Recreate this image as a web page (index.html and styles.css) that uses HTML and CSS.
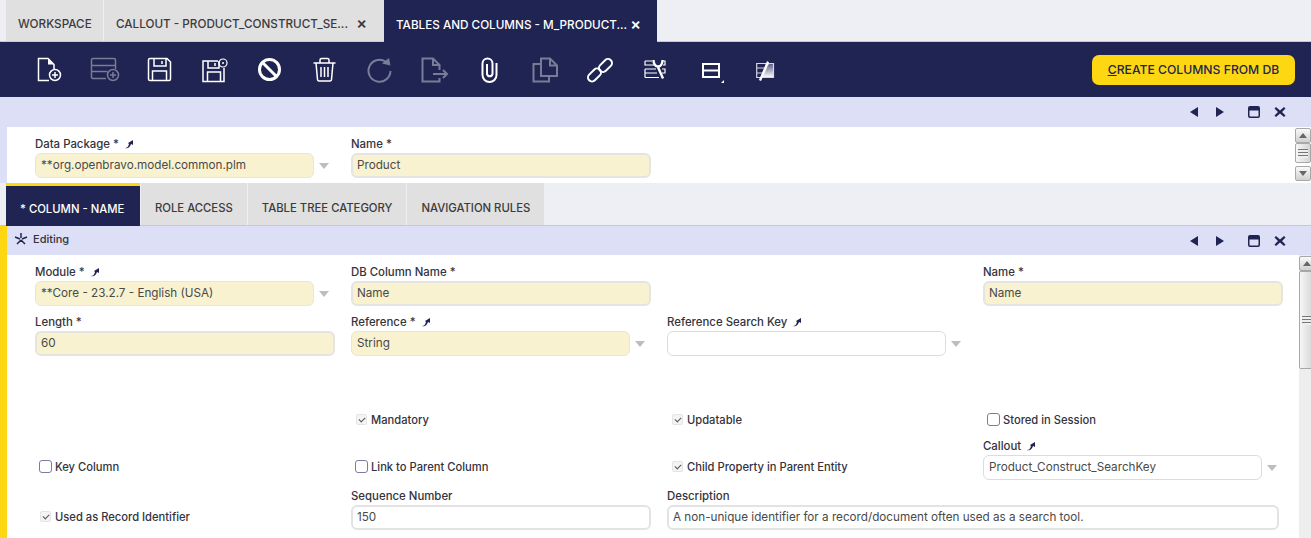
FILE: index.html
```html
<!DOCTYPE html>
<html lang="en">
<head>
  <meta charset="UTF-8">
  <title>Tables and Columns</title>
  <link rel="stylesheet" href="styles.css">
</head>
<body>
  <div class="tabbar">
    <div class="mtab">WORKSPACE</div>
    <div class="mtab callout"><span>CALLOUT - PRODUCT_CONSTRUCT_SE...</span><b>×</b></div>
    <div class="mtab active"><span>TABLES AND COLUMNS - M_PRODUCT...</span><b>×</b></div>
  </div>

  <div class="toolbar">
    <div class="slot"><svg class="tool" width="33" height="27" viewBox="0 0 33 27"><path d="M16 24.500H5.500V2.500H15L21 8.500V13"/><path d="M15 2.500V8.500H21z" class="fill"/><circle cx="22" cy="19" r="5.500"/><path d="M19 19h6M22 16v6"/></svg></div>
    <div class="slot off"><svg class="tool" width="33" height="27" viewBox="0 0 33 27"><path d="M18 22.500H5a1.500 1.500 0 0 1-1.500-1.500V4A1.500 1.500 0 0 1 5 2.500h21A1.500 1.500 0 0 1 27.500 4v9M3.500 9.500h24M3.500 15.500h16"/><circle cx="25" cy="19" r="5.500"/><path d="M22 19h6M25 16v6"/></svg></div>
    <div class="slot"><svg class="tool" width="33" height="27" viewBox="0 0 33 27"><path d="M5.500 4A1.500 1.500 0 0 1 7 2.500h17L27.500 6v17a1.500 1.500 0 0 1-1.500 1.500H7A1.500 1.500 0 0 1 5.500 23zM11 2.500V10h12V2.500M19 5v3M9.500 24.500V15h14v9.500"/></svg></div>
    <div class="slot"><svg class="tool" width="33" height="27" viewBox="0 0 33 27"><path d="M20 5H5v20.500h21V12M10 5v7h11V5M17 7v3M9.500 25.500V16h13v9.500"/><circle cx="25" cy="7" r="4" class="fine"/><circle cx="25" cy="7" r="1" class="fill"/></svg></div>
    <div class="slot"><svg class="tool bold" width="33" height="27" viewBox="0 0 33 27"><circle cx="16.500" cy="13.500" r="10"/><path d="M9.500 6.500l14 14"/></svg></div>
    <div class="slot"><svg class="tool" width="33" height="27" viewBox="0 0 33 27"><path d="M5.500 7h22M12 7V4a1.500 1.500 0 0 1 1.500-1.500h6A1.500 1.500 0 0 1 21 4v3M8 7l1.500 16.500a1.500 1.500 0 0 0 1.500 1.500h11a1.500 1.500 0 0 0 1.500-1.500L25 7M13 11v10M16.500 11v10M20 11v10"/></svg></div>
    <div class="slot off"><svg class="tool thick" width="33" height="27" viewBox="0 0 33 27"><path d="M22.500 5.500A11 11 0 1 0 27.500 15"/><path d="M19 7.500l8.500 2L26 2z" class="fill"/></svg></div>
    <div class="slot off"><svg class="tool thick" width="33" height="27" viewBox="0 0 33 27"><path d="M21.500 14V9l-6.500-6.500H4.500v23h17V22M15 2.500V9h6.500M15 18h14M25 14l4 4-4 4"/></svg></div>
    <div class="slot"><svg class="tool thick" width="33" height="27" viewBox="0 0 33 27"><path d="M23.500 7v12a7 7 0 0 1-14 0V7.500a5 5 0 0 1 10 0V18a2.800 2.800 0 0 1-5.500 0V8"/></svg></div>
    <div class="slot off"><svg class="tool thick" width="33" height="27" viewBox="0 0 33 27"><path d="M13 8H5.500v17.500H21V20M13 20V2.500h9l7 7V20zM22 2.500v7h7"/></svg></div>
    <div class="slot"><svg class="tool thick" width="33" height="27" viewBox="0 0 33 27"><rect x="15" y="5.500" width="15" height="8" rx="4" transform="rotate(-45 22.500 9.500)"/><rect x="4" y="15" width="15" height="8" rx="4" transform="rotate(-45 11.500 19)"/></svg></div>
    <div class="slot"><svg class="tool fine-all" width="33" height="27" viewBox="0 0 33 27"><path d="M7 5h7M24 5h3v4h-2M7 5v4h10M7 13h11M24 13h3v4h-3M7 13v4h12M7 21.500h14M7 17v4.500"/><path d="M15.500 4c0 4 2 6.500 4.500 6.500s4.500-2.500 4.500-6.500M19.500 10l5.500 12.500" class="knock"/></svg></div>
    <div class="slot"><svg class="tool layout" width="33" height="27" viewBox="0 0 33 27"><rect x="10" y="8" width="16" height="13"/><path d="M10 14.500h16"/><path d="M31 24v3h-3z" class="fill"/></svg></div>
    <div class="slot"><svg class="tool fine-all" width="33" height="27" viewBox="0 0 33 27"><defs><linearGradient id="fade" x1="0" y1="0" x2="0" y2="1"><stop offset="0" stop-color="#555a80"/><stop offset="1" stop-color="#ffffff"/></linearGradient></defs><path d="M19.300 7.500h6.200v14H13.700z" fill="url(#fade)" stroke="none"/><path d="M8.700 7.500h16.800v14H8.700zM8.700 12h8M8.700 17h6" class="pale"/><path d="M12 24.500L20 6" class="knock"/><path d="M17.500 9l2.500-4.500.5 4.500z" class="fill"/></svg></div>
    <button class="process"><u>C</u>REATE COLUMNS FROM DB</button>
  </div>

  <div class="band">
    <svg class="ctl" viewBox="0 0 12 12"><path d="M10 1v10L2 6z"/></svg>
    <svg class="ctl" viewBox="0 0 12 12"><path d="M2 1v10l8-5z"/></svg>
    <svg class="ctl wide" viewBox="0 0 12 12"><path fill-rule="evenodd" d="M2 0h8a2 2 0 0 1 2 2v8a2 2 0 0 1-2 2H2a2 2 0 0 1-2-2V2a2 2 0 0 1 2-2zM1.500 4.500V10l.5.500h8l.5-.5V4.500z"/></svg>
    <svg class="ctl" viewBox="0 0 12 12"><path d="M2 1l4 3.500L10 1l1.500 1.500L8 6l3.500 3.500L10 11 6 7.500 2 11 .5 9.500 4 6 .5 2.500z"/></svg>
  </div>

  <div class="header-form">
    <div class="hform">
      <div class="field">
        <label>Data Package * <svg class="lnk" viewBox="0 0 10 10"><path d="M1 9c2 0 3-1 4-4L4 4l5-3v5L7 5c-1 3-3 5-6 4z"/></svg></label>
        <div class="sel"><div class="inp req">**org.openbravo.model.common.plm</div><i class="arrow"></i></div>
      </div>
      <div class="field">
        <label>Name *</label>
        <div class="inp text">Product</div>
      </div>
    </div>
    <div class="sbar small">
      <div class="sb-btn up"></div>
      <div class="sb-thumb"><i></i></div>
      <div class="sb-btn down"></div>
    </div>
  </div>

  <div class="subtabs">
    <div class="stab active">* COLUMN - NAME</div>
    <div class="stab">ROLE ACCESS</div>
    <div class="stab">TABLE TREE CATEGORY</div>
    <div class="stab">NAVIGATION RULES</div>
  </div>

  <div class="edit">
    <div class="band editing">
      <svg class="star" viewBox="0 0 14 14"><path d="M7 1v5M7 8l4 4M7 8l-4 4M1 5l5 2M13 5L8 7"/></svg>
      <span class="status">Editing</span>
      <svg class="ctl" viewBox="0 0 12 12"><path d="M10 1v10L2 6z"/></svg>
      <svg class="ctl" viewBox="0 0 12 12"><path d="M2 1v10l8-5z"/></svg>
      <svg class="ctl wide" viewBox="0 0 12 12"><path fill-rule="evenodd" d="M2 0h8a2 2 0 0 1 2 2v8a2 2 0 0 1-2 2H2a2 2 0 0 1-2-2V2a2 2 0 0 1 2-2zM1.500 4.500V10l.5.500h8l.5-.5V4.500z"/></svg>
      <svg class="ctl" viewBox="0 0 12 12"><path d="M2 1l4 3.500L10 1l1.500 1.500L8 6l3.500 3.500L10 11 6 7.500 2 11 .5 9.500 4 6 .5 2.500z"/></svg>
    </div>
    <div class="form-wrap">
      <div class="form">
        <div class="field">
          <label>Module * <svg class="lnk" viewBox="0 0 10 10"><path d="M1 9c2 0 3-1 4-4L4 4l5-3v5L7 5c-1 3-3 5-6 4z"/></svg></label>
          <div class="sel"><div class="inp req">**Core - 23.2.7 - English (USA)</div><i class="arrow"></i></div>
        </div>
        <div class="field">
          <label>DB Column Name *</label>
          <div class="inp text">Name</div>
        </div>
        <div class="field"></div>
        <div class="field">
          <label>Name *</label>
          <div class="inp text">Name</div>
        </div>

        <div class="field">
          <label>Length *</label>
          <div class="inp text">60</div>
        </div>
        <div class="field">
          <label>Reference * <svg class="lnk" viewBox="0 0 10 10"><path d="M1 9c2 0 3-1 4-4L4 4l5-3v5L7 5c-1 3-3 5-6 4z"/></svg></label>
          <div class="sel"><div class="inp req">String</div><i class="arrow"></i></div>
        </div>
        <div class="field">
          <label>Reference Search Key <svg class="lnk" viewBox="0 0 10 10"><path d="M1 9c2 0 3-1 4-4L4 4l5-3v5L7 5c-1 3-3 5-6 4z"/></svg></label>
          <div class="sel"><div class="inp blank"></div><i class="arrow"></i></div>
        </div>
        <div class="field"></div>

        <div class="check-cell low"></div>
        <div class="check-cell low"><span class="chk on"></span>Mandatory</div>
        <div class="check-cell low"><span class="chk on"></span>Updatable</div>
        <div class="check-cell low"><span class="chk"></span>Stored in Session</div>

        <div class="check-cell"><span class="chk"></span>Key Column</div>
        <div class="check-cell"><span class="chk"></span>Link to Parent Column</div>
        <div class="check-cell"><span class="chk on"></span>Child Property in Parent Entity</div>
        <div class="field">
          <label>Callout <svg class="lnk" viewBox="0 0 10 10"><path d="M1 9c2 0 3-1 4-4L4 4l5-3v5L7 5c-1 3-3 5-6 4z"/></svg></label>
          <div class="sel"><div class="inp blank">Product_Construct_SearchKey</div><i class="arrow"></i></div>
        </div>

        <div class="check-cell"><span class="chk on"></span>Used as Record Identifier</div>
        <div class="field">
          <label>Sequence Number</label>
          <div class="inp plain">150</div>
        </div>
        <div class="field span2">
          <label>Description</label>
          <div class="inp plain wide">A non-unique identifier for a record/document often used as a search tool.</div>
        </div>
      </div>
      <div class="sbar">
        <div class="sb-btn up"></div>
        <div class="sb-thumb long"><i></i></div>
      </div>
    </div>
  </div>
</body>
</html>
```

FILE: styles.css
```css
* {
  box-sizing: border-box;
}
html, body {
  margin: 0;
  height: 100%;
  overflow: hidden;
}
body {
  width: 1311px;
  height: 538px;
  font-family: Inter, "Liberation Sans", sans-serif;
  font-size: 11.4px;
  color: #33333d;
  background: #fff;
}

/* top tabs */
.tabbar {
  display: flex;
  height: 42px;
  padding-left: 6px;
  background: #eeeff5;
  border-bottom: 1px solid #c8c9cf;
}
.mtab {
  display: flex;
  align-items: center;
  justify-content: space-between;
  flex: none;
  width: 97px;
  height: 41px;
  padding: 7px 12px 0;
  margin-right: 1px;
  background: #e0e0e0;
  font-size: 11.7px;
  font-weight: 500;
  color: #3c3a3c;
  white-space: nowrap;
}
.mtab.callout {
  width: 280px;
  margin-right: 0;
  padding-right: 17px;
}
.mtab.active {
  width: 273px;
  height: 42px;
  background: #202452;
  color: #fff;
  padding-right: 16px;
}
.mtab b {
  margin-top: -2px;
  font-size: 16px;
  font-weight: 600;
}

/* toolbar */
.toolbar {
  display: flex;
  align-items: center;
  height: 55px;
  padding: 0 16px 0 22px;
  background: #202452;
}
.slot {
  flex: none;
  display: flex;
  justify-content: center;
  width: 55px;
  height: 27px;
}
.slot.off {
  opacity: .4;
}
.tool {
  fill: none;
  stroke: #fff;
  stroke-width: 1.500;
}
.tool.thick {
  stroke-width: 2;
}
.tool.bold {
  stroke-width: 3;
}
.tool.layout {
  stroke-width: 2;
}
.tool.fine-all {
  stroke-width: 1.200;
}
.tool .fine {
  stroke-width: 1.200;
}
.tool .fill {
  fill: #fff;
  stroke: none;
}
.tool .pale {
  stroke: #d5d6e2;
}
.tool .knock {
  stroke-width: 2.400;
}
.process {
  flex: none;
  margin-left: auto;
  width: 203px;
  height: 30px;
  border: none;
  border-radius: 7px;
  background: #fcd712;
  color: #202452;
  font-family: inherit;
  font-size: 12.2px;
  font-weight: 500;
}

/* light blue bands with window controls */
.band {
  display: flex;
  align-items: center;
  justify-content: flex-end;
  gap: 14px;
  height: 30px;
  padding-right: 25px;
  background: #dddff6;
}
.ctl {
  width: 12px;
  height: 12px;
  fill: #202452;
}
.ctl.wide {
  margin-left: 8px;
}

/* header form */
.header-form {
  display: flex;
  height: 56px;
  padding-left: 7px;
  background: #fff;
  box-shadow: inset 7px 0 0 #dddff6;
}
.hform {
  flex: 1;
  display: grid;
  grid-template-columns: 316px 316px;
  padding: 9px 0 0 28px;
}
.field {
  min-width: 0;
}
.field label {
  display: block;
  height: 17px;
  line-height: 17px;
  font-weight: 500;
  color: #33333d;
}
.lnk {
  width: 10px;
  height: 10px;
  margin-left: 2px;
  fill: #202452;
  vertical-align: -1px;
}
.sel {
  display: flex;
  align-items: center;
}
.inp {
  height: 25px;
  padding: 0 5px;
  line-height: 23px;
  border: 1px solid #eae6cf;
  border-radius: 6px;
  font-size: 11.7px;
  color: #4a4a4a;
  white-space: nowrap;
}
.sel .inp {
  width: 279px;
}
.inp.req {
  background: #f9f2d0;
}
.inp.text {
  width: 300px;
  padding: 0 4px;
  line-height: 21px;
  background: #f9f2d0;
  border: 2px solid #e4e4e0;
}
.inp.blank {
  background: #fff;
  border-color: #dcdcdc;
}
.inp.plain {
  width: 300px;
  padding: 0 4px;
  line-height: 21px;
  background: #fff;
  border: 2px solid #e3e3e3;
}
.inp.plain.wide {
  width: 612px;
}
.arrow {
  width: 0;
  height: 0;
  margin-left: 5px;
  border-left: 5px solid transparent;
  border-right: 5px solid transparent;
  border-top: 6px solid #bdbdbd;
}

/* sub tabs */
.subtabs {
  display: flex;
  height: 43px;
  padding-left: 6px;
  background: #eeeff5;
  border-bottom: 1px solid #c8c9cf;
}
.stab {
  display: flex;
  align-items: center;
  padding: 8px 14px 0;
  margin-right: 1px;
  background: #e0e0e0;
  font-size: 11.3px;
  font-weight: 500;
  color: #3c3a3c;
  white-space: nowrap;
}
.stab.active {
  width: 134px;
  height: 43px;
  padding-top: 5px;
  background: #202452;
  color: #fff;
  border-top: 3px solid #fcd712;
}

/* edit view */
.edit {
  border-left: 7px solid #fcd712;
}
.editing {
  height: 29px;
  padding-left: 7px;
  justify-content: flex-start;
}
.star {
  width: 14px;
  height: 14px;
  margin-bottom: 3px;
  fill: none;
  stroke: #202452;
  stroke-width: 1.500;
}
.status {
  margin: 0 auto 3px -9px;
  font-size: 11px;
  font-weight: 500;
}
.form-wrap {
  display: flex;
  height: 283px;
}
.form {
  flex: 1;
  display: grid;
  grid-template-columns: repeat(4, 316px);
  grid-template-rows: 50px 50px 74px 50px 50px;
  padding: 9px 0 0 28px;
}
.span2 {
  grid-column: span 2;
}
.check-cell {
  display: flex;
  align-items: flex-start;
  padding: 22px 0 0 4px;
  line-height: 15px;
  font-size: 11.2px;
  font-weight: 500;
  color: #33333d;
}
.check-cell.low {
  padding-top: 49px;
}
.chk {
  flex: none;
  width: 13px;
  height: 13px;
  margin-right: 3px;
  border: 1px solid #7a7ca8;
  border-radius: 3px;
  background: #fff;
}
.chk.on {
  position: relative;
  width: 11px;
  height: 11px;
  margin: 1px 4px 0 1px;
  border-color: #e4e4e4;
  border-radius: 2px;
  background: #f4f4f4;
}
.chk.on::after {
  content: "";
  position: absolute;
  left: 2px;
  top: 2px;
  width: 5px;
  height: 3px;
  border-left: 1px solid #555;
  border-bottom: 1px solid #555;
  transform: rotate(-45deg);
}

/* old style scrollbars */
.sbar {
  flex: none;
  display: flex;
  flex-direction: column;
  width: 16px;
  padding-top: 1px;
  background: #eeeeee;
}
.sb-btn {
  position: relative;
  flex: none;
  height: 15px;
  border: 1px solid #a8a8a8;
  border-radius: 2px;
  background: linear-gradient(#fafafa, #d0d0d0);
}
.sb-btn::after {
  content: "";
  position: absolute;
  left: 3px;
  top: 4px;
  border-left: 4px solid transparent;
  border-right: 4px solid transparent;
}
.sb-btn.up::after {
  border-bottom: 5px solid #666;
}
.sb-btn.down::after {
  border-top: 5px solid #666;
}
.sb-thumb {
  display: flex;
  align-items: center;
  justify-content: center;
  flex: none;
  height: 20px;
  margin-bottom: 3px;
  border: 1px solid #a8a8a8;
  border-radius: 2px;
  background: linear-gradient(90deg, #f6f6f6, #d4d4d4);
}
.sb-thumb.long {
  height: 98px;
}
.sb-thumb i {
  width: 10px;
  height: 9px;
  background: repeating-linear-gradient(#777 0 1px, #eee 1px 3px);
}
.sbar.small {
  background: #fff;
}
```
